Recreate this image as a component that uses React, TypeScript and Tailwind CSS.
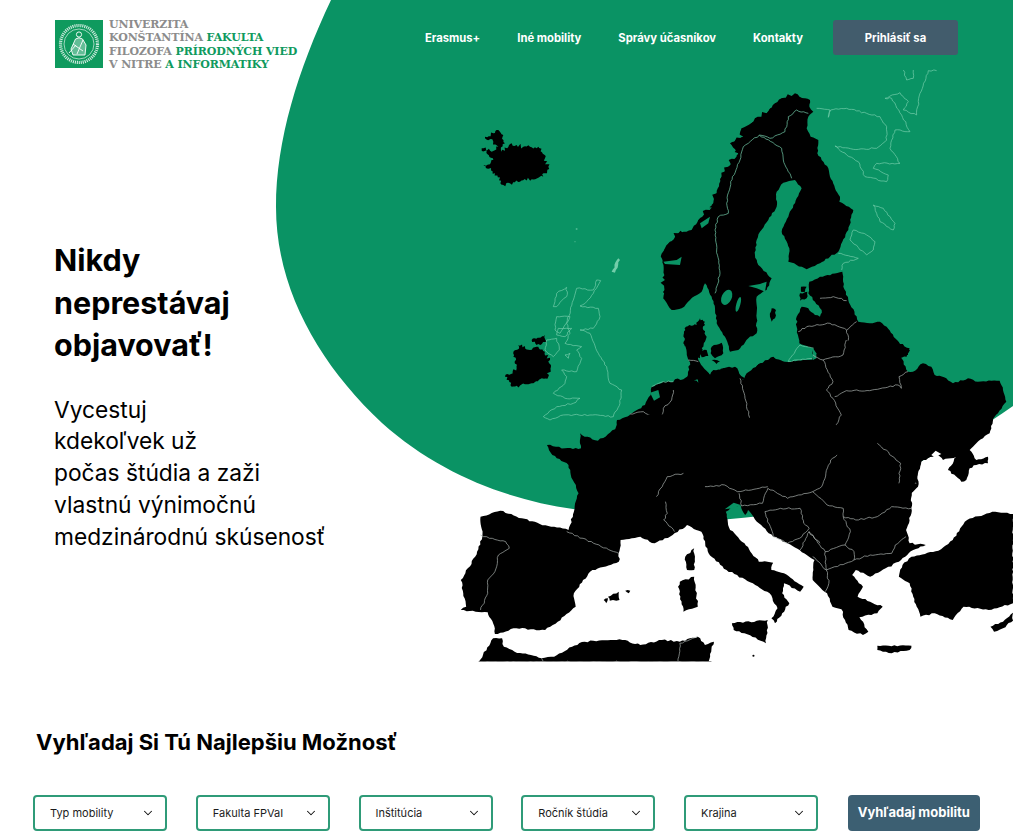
import React from "react";
import { ChevronDown } from "lucide-react";

const BLACK = "#000";
const LINE = "#a9b0ad";
const PALE = "#74cdaa";
const GREEN = "#0a9364";

function wiggle(p: string, amp: number, seg: number, closed: boolean) {
  const pts = p
    .trim()
    .split(/\s+/)
    .map((s) => s.split(",").map(Number));
  let seed = 7;
  for (const q of pts) seed = (seed * 31 + q[0] * 7 + q[1]) % 233280;
  const rnd = () => {
    seed = (seed * 9301 + 49297) % 233280;
    return seed / 233280 - 0.5;
  };
  const out: string[] = [];
  const n = closed ? pts.length : pts.length - 1;
  for (let i = 0; i < n; i++) {
    const a = pts[i];
    const b = pts[(i + 1) % pts.length];
    const dx = b[0] - a[0];
    const dy = b[1] - a[1];
    const len = Math.hypot(dx, dy) || 1;
    const k = Math.max(1, Math.round(len / seg));
    out.push(`${a[0]},${a[1]}`);
    for (let j = 1; j < k; j++) {
      const t = j / k;
      const o = rnd() * amp * 2;
      out.push(`${(a[0] + dx * t - (dy / len) * o).toFixed(1)},${(a[1] + dy * t + (dx / len) * o).toFixed(1)}`);
    }
  }
  if (!closed) out.push(pts[pts.length - 1].join(","));
  return out.join(" ");
}

function L({ p, c = BLACK, amp = 2.5 }: { p: string; c?: string; amp?: number }) {
  return <polygon points={wiggle(p, amp, 8, true)} fill={c} />;
}
function Rough({ p, amp = 8, seg = 5 }: { p: string; amp?: number; seg?: number }) {
  return <polygon points={wiggle(p, amp, seg, true)} fill={BLACK} />;
}
function B({ p, c = LINE, w = 0.7, close = false }: { p: string; c?: string; w?: number; close?: boolean }) {
  const d = wiggle(p, 2.2, 8, close);
  return close ? (
    <polygon points={d} fill="none" stroke={c} strokeWidth={w} vectorEffect="non-scaling-stroke" />
  ) : (
    <polyline points={d} fill="none" stroke={c} strokeWidth={w} vectorEffect="non-scaling-stroke" />
  );
}

function Blob() {
  return (
    <svg className="absolute left-0 top-0" width="1013" height="700" viewBox="0 0 1013 700">
      <path
        d="M331 0 C298 70 276 140 276 207 C276 290 320 365 382 423 C440 475 510 500 573 509 C640 520 700 524 760 516 C860 500 950 450 1013 406 L1013 0 Z"
        fill={GREEN}
      />
    </svg>
  );
}

function EuropeMap() {
  return (
    <svg className="absolute left-0 top-0" width="1013" height="662" viewBox="0 0 1013 662">
      {/* Scandinavia */}
      <g transform="translate(600 60) scale(0.3333)">
        <L amp={2} p="545,115 575,108 600,112 630,120 628,140 640,155 625,170 620,205 632,230 655,240 652,280 685,325 690,350 705,385 720,410 718,425 760,450 745,510 715,575 690,590 660,610 620,628 590,615 565,605 568,565 545,515 565,470 590,415 605,385 585,360 550,368 530,395 530,440 505,480 480,515 470,540 465,585 475,615 515,655 500,690 470,710 470,760 470,820 445,835 415,870 390,875 375,830 350,790 345,745 335,710 315,670 305,695 270,720 245,745 215,750 190,715 195,660 188,600 195,565 235,520 275,510 295,480 330,450 350,400 365,350 385,320 415,280 390,250 430,230 425,205 460,185 500,160 525,130" />
        <Rough amp={13} seg={9} p="190,715 195,660 188,600 195,565 235,520 275,510 295,480 330,450 350,400 365,350 385,320 415,280 400,250 430,230 425,205 460,185 500,160 525,130 545,115 575,108 600,112 630,120 628,140 600,140 520,180 440,260 390,340 360,420 300,510 220,570 220,700" />
        <ellipse cx="380" cy="712" rx="15" ry="24" fill={GREEN} transform="rotate(25 380 712)" />
        <ellipse cx="415" cy="733" rx="6" ry="23" fill={GREEN} transform="rotate(15 415 733)" />
        <polygon points="445,678 480,672 500,665 495,695 470,685" fill={GREEN} />
        <polygon points="300,490 330,470 325,490 305,505" fill={GREEN} />
        <polygon points="190,605 230,600 245,590 240,615 195,612" fill={GREEN} />
        <B p="345,700 360,640 350,570 345,510 355,470 385,460 380,430 392,365 420,300 430,260 445,250 478,225" c={PALE} />
        <B p="478,225 545,265 550,300 575,355" c={PALE} />
        <B p="478,225 510,235 555,215 565,170 590,150 625,160" c={PALE} />
        <L p="515,745 528,750 525,775 515,785 510,770" />
        <L p="600,700 622,695 620,715 600,722" />
        <L p="603,680 620,680 615,695 603,695" />
        {/* Baltics */}
        <L p="628,665 660,650 727,635 730,680 745,720 775,785 810,790 840,785 860,800 900,855 930,870 920,890 900,895 900,960 590,960 540,905 650,900 650,870 598,850 590,800 590,770 605,740 625,745 645,765 660,770 665,750 645,725 625,700" />
        <L p="435,960 470,918 520,890 545,908 600,908 600,960" />
        <polygon points="565,905 600,855 650,868 650,895 600,900" fill={GREEN} />
        <B p="565,905 600,855 650,868 650,895 600,900" c={PALE} close />
        <B p="660,715 700,710 740,722" />
        <B p="595,815 620,800 690,790 740,810 770,785" />
        <B p="740,810 745,840 725,885 680,910 695,960" />
        {/* Denmark */}
        <Rough amp={4} p="258,800 290,795 300,775 315,785 310,810 320,830 310,860 300,895 270,905 265,870 250,850" />
        <L p="300,872 320,870 325,888 305,892" />
        <L p="335,860 365,848 370,880 345,895 332,880" />
        <L p="335,900 360,905 350,912" />
        <L p="270,905 290,910 330,945 370,925 405,920 435,960 260,960" />
        <B p="265,900 290,908" />
        {/* Russia: unfilled outlines */}
        <B c={PALE} p="650,145 690,150 685,172 692,150 740,145 800,160 840,170 860,200 860,240 830,265 760,268 705,258 740,285 775,305 795,350 860,365 865,345 820,325 830,310 900,310 870,265 885,210 930,215 905,165 875,115 855,115 900,98 925,125 910,150 950,165 960,100 985,32 1010,32" />
        <B c={PALE} p="910,30 920,60 940,55 940,30" />
        <B c={PALE} close p="760,510 800,525 825,545 820,570 800,585 750,540" />
        <B c={PALE} close p="820,435 850,445 885,490 880,510 840,485 830,460" />
        <B c={PALE} p="715,580 775,595 730,610 725,630" />
      </g>

      {/* Central Europe north coast */}
      <g transform="translate(630 340) scale(0.3333)">
        <L p="0,222 45,195 62,165 65,140 100,125 130,125 135,118 160,118 175,108 205,128 195,100 175,60 165,0 200,0 205,60 240,105 250,90 290,85 310,90 340,120 350,100 390,70 430,52 470,70 555,58 600,60 600,480 0,480" />
        <polygon points="60,158 85,150 90,172 72,182" fill={GREEN} />
        <B p="175,60 205,65" />
        <B p="330,115 345,175 360,240" />
        <B close p="360,240 395,262 430,265 480,295 430,345 370,335 335,352 300,320 275,280 320,255" />
        <B p="480,295 520,305 565,290 600,300 590,330 540,345 490,380 440,372 430,345" />
        <B p="335,352 298,382 305,405 260,405 225,412 195,405" />
        <B p="440,372 420,395 415,430 360,455 290,432 205,430 195,405" />
        <B p="165,400 130,408 105,420 80,460 100,470 150,460 185,460 215,430" />
        <B p="155,340 135,400" />
        <B p="110,325 155,340" />
        <B p="0,245 30,285 55,295 85,310 105,290 90,245 100,205 125,180 130,150" />
        <B p="0,222 40,215 85,240" />
        <B p="85,310 110,325 100,290" />
        <B p="415,430 450,460 500,475 560,450 600,380" />
        <B p="65,140 100,125 130,125" c={PALE} />
      </g>

      {/* East */}
      <g transform="translate(813 340) scale(0.3333)">
        <L p="240,0 290,25 285,45 262,50 285,95 300,95 330,70 355,80 365,105 400,115 420,130 465,115 495,125 560,122 570,150 580,185 555,220 545,230 530,280 490,310 470,330 490,360 525,350 525,370 490,375 470,385 460,420 445,425 405,390 430,350 390,360 375,345 345,355 325,365 315,400 315,440 295,460 290,480 0,480 0,0" />
        <polygon points="0,25 10,40 10,55 0,60" fill={GREEN} />
        <polygon points="355,345 368,332 385,342 365,352" fill="#fff" />
        <B p="30,60 60,125 40,150 60,175 85,225 50,290 45,330" />
        <B p="0,45 30,60 90,45 100,0" />
        <B p="65,170 100,152 170,152 255,135 265,145 258,110 285,95" />
        <B p="0,290 50,300 45,330 0,335" />
        <B p="0,335 40,340 75,345 130,345 185,310 215,295 265,305 290,345 310,370 280,375 270,430 310,430" />
        <B p="185,310 250,370 260,430" />
        <B p="70,350 45,370 25,440 0,450 20,480" />
      </g>

      {/* South */}
      <g transform="translate(450 380) scale(0.3591 0.3333)">
        <L p="501,105 465,120 460,148 412,182 375,170 362,160 365,205 320,205 270,195 285,225 330,255 342,300 358,340 345,395 330,450 250,432 200,415 140,392 85,410 90,470 70,530 30,600 45,680 30,690 105,697 120,730 125,762 185,745 265,750 300,725 350,680 345,640 390,575 470,545 475,480 530,470 570,490 620,465 660,435 700,455 720,520 770,570 850,615 890,640 912,685 895,715 905,730 925,700 945,670 925,640 930,610 975,635 985,620 930,580 895,570 900,548 860,545 820,490 780,450 768,395 790,380 810,378 822,405 830,390 860,430 900,470 940,490 1000,530 1015,540 1010,600 1050,640 1065,680 1090,688 1100,720 1110,750 1150,765 1165,755 1140,712 1190,700 1205,680 1135,650 1150,620 1120,585 1130,570 1170,590 1250,545 1290,510 1325,495 1280,490 1270,450 1285,400 1285,330 1300,300 1300,150 700,105" />
        <polygon points="765,388 790,368 812,376 790,384" fill={GREEN} />
        <B p="805,340 812,378 870,370 885,325 940,355 970,345" />
        <B p="710,320 765,315 800,335 885,320" />
        <B close p="877,395 920,385 975,385 985,430 1000,445 980,470 940,490 900,470" />
        <B p="970,345 1010,335 1050,375 1095,385 1095,410 1115,455 1100,495 1045,515 1025,490 1000,455" />
        <B p="1010,335 1035,320 1060,240 1078,225" />
        <B p="1095,410 1130,420 1190,410 1230,380 1285,385" />
        <B p="1100,495 1125,515 1125,540 1170,525 1230,520 1240,495 1270,470" />
        <B p="1045,515 1048,570 1125,540" />
        <B p="1010,530 1048,570 1055,610 1045,635" />
        <B p="975,510 1000,455 1030,490" />
        <B p="600,365 605,400 595,420 625,455" />
        <B p="325,455 400,490 470,520" />
        <B p="85,465 110,475 155,485 165,505 135,525 125,575 105,600 105,640 85,690" />
        <B p="575,350 605,290 650,280" />
        <B p="1250,310 1255,250 1190,190" />
        {/* Turkey */}
        <L p="1250,590 1260,555 1285,530 1360,512 1400,480 1440,420 1510,395 1568,402 1568,670 1500,690 1430,680 1400,720 1350,700 1310,710 1290,650 1280,610" />
        <L p="1505,740 1540,725 1568,698 1568,722 1540,745 1515,755" />
        <L p="1190,797 1285,797 1280,810 1230,820 1190,810" />
        <L p="785,730 885,720 880,790 820,760 790,750" />
        <L p="655,530 680,505 680,570 660,570" />
        <L p="640,605 680,590 690,680 650,695 635,620" />
        <L p="440,650 470,635 472,660 445,662" />
        <L p="428,660 440,655 435,670" />
        <L p="488,632 502,632 498,640" />
        <circle cx="845" cy="827" r="3" fill={BLACK} />
        <L p="80,845 120,775 145,775 150,800 180,815 255,835 290,830 340,800 375,785 480,780 530,795 590,780 640,785 690,770 710,795 735,785 720,845" />
        <B p="690,770 640,790 635,845" />
        <B p="255,835 260,845" />
        <polyline points="80,845 728,845" stroke="#8d8d8d" strokeWidth={1} vectorEffect="non-scaling-stroke" />
      </g>

      {/* West */}
      <g transform="translate(450 120) scale(0.3333)">
        <Rough amp={7} p="105,50 130,40 145,30 160,45 165,70 155,95 185,70 200,75 220,80 265,80 285,115 295,140 280,170 210,185 160,195 135,160 100,135 130,120 95,85 125,95 145,80 130,65 105,55" />
        <Rough amp={6} p="205,675 240,690 265,680 300,720 295,770 250,790 185,800 165,770 200,745 190,710" />
        <Rough amp={4} p="245,660 285,645 290,665 260,675" />
        <B c={PALE} close p="380,505 430,510 440,480 452,482 430,520 410,545 390,558 445,565 450,590 430,625 390,630 420,640 445,700 470,740 480,790 515,810 510,850 490,890 420,885 340,885 300,900 280,890 320,860 370,850 390,835 345,835 310,820 345,790 350,770 335,750 380,755 395,715 380,690 395,680 345,670 360,640 350,610 370,540" />
        <B c={PALE} close p="310,560 320,520 350,502 350,530 320,560" />
        <B c={PALE} close p="320,590 360,590 330,640 315,630" />
        <B c={PALE} close p="325,625 365,625 345,650 320,645" />
        <B c={PALE} close p="290,660 320,655 328,690 310,710 285,690" />
        <B c={PALE} close p="345,705 360,700 355,715" />
        <L c={PALE} amp={3} p="485,455 505,415 510,420 495,458" />
        <circle cx="380" cy="327" r="3" fill={PALE} opacity="0.6" />
        <circle cx="375" cy="365" r="2" fill={PALE} opacity="0.6" />
      </g>
    </svg>
  );
}

function Seal() {
  return (
    <svg width="48" height="48" viewBox="0 0 48 48" className="shrink-0">
      <rect width="48" height="48" fill="#0f9a5e" />
      <circle cx="24" cy="24" r="18.5" fill="none" stroke="#fff" strokeWidth="3.2" strokeDasharray="1.1 0.9" opacity="0.8" />
      <circle cx="24" cy="24" r="15" fill="none" stroke="#fff" strokeWidth="0.6" />
      <circle cx="24" cy="14.5" r="2.6" fill="none" stroke="#fff" strokeWidth="0.9" />
      <path d="M20.5 19 Q24 16.5 27.5 19 L31 25 L30 35 H18 L16 29 Z" fill="#fff" opacity="0.35" />
      <path d="M20.5 19 Q24 16.5 27.5 19 L31 25 L30 35 H18 L16 29 Z M18 24 L28 31 M28 20 L22 34 M14 33 L21 25" fill="none" stroke="#fff" strokeWidth="0.9" />
    </svg>
  );
}

function Logo() {
  const serif = "font-['DejaVu_Serif','Liberation_Serif',serif] font-bold";
  const gray = "text-[#8c8c8c]";
  const green = "text-[#0f9a5e]";
  return (
    <div className="flex items-start gap-[6px]">
      <Seal />
      <div className={`${serif} mt-[-2px] text-[11px] leading-[13.4px] tracking-[-0.1px] whitespace-nowrap`}>
        <div className={gray}>UNIVERZITA</div>
        <div className={gray}>
          KONŠTANTÍNA <span className={green}>FAKULTA</span>
        </div>
        <div className={gray}>
          FILOZOFA <span className={green}>PRÍRODNÝCH VIED</span>
        </div>
        <div className={gray}>
          V NITRE <span className={green}>A INFORMATIKY</span>
        </div>
      </div>
    </div>
  );
}

function Select({ label }: { label: string }) {
  return (
    <div className="flex h-[36px] w-[134px] items-center justify-between rounded-[4px] border-2 border-[#2f9b78] pl-[15px] pr-[10px] text-[11px] text-[#1c1c1c]">
      <span>{label}</span>
      <ChevronDown size={14} strokeWidth={1.8} className="text-[#111]" />
    </div>
  );
}

export default function App() {
  return (
    <div className="relative h-[834px] w-full overflow-hidden bg-white font-['Inter','Liberation_Sans',sans-serif] text-black">
      <section className="relative h-[700px]">
        <Blob />
        <EuropeMap />
        <header className="relative flex h-[75px] items-start justify-between pl-[55px] pr-[55px] pt-[20px]">
          <Logo />
          <nav className="flex items-center gap-[37px] text-[11.25px] font-bold text-white">
            <a className="pt-[2px]">Erasmus+</a>
            <a className="pt-[2px]">Iné mobility</a>
            <a className="pt-[2px]">Správy účasníkov</a>
            <a className="mr-[-7px] pt-[2px]">Kontakty</a>
            <a className="flex h-[35px] w-[125px] items-center justify-center rounded-[3px] bg-[#425c6c] pt-[2px]">Prihlásiť sa</a>
          </nav>
        </header>
        <div className="relative pl-[54px] pt-[164px]">
          <h1 className="text-[30.5px] font-bold leading-[42.5px]">
            Nikdy
            <br />
            neprestávaj
            <br />
            objavovať!
          </h1>
          <p className="mt-[27px] text-[22.75px] leading-[31.75px]">
            Vycestuj
            <br />
            kdekoľvek už
            <br />
            počas štúdia a zaži
            <br />
            vlastnú výnimočnú
            <br />
            medzinárodnú skúsenosť
          </p>
        </div>
      </section>
      <section>
        <h2 className="mt-[27px] pl-[36px] text-[22px] font-bold leading-[30px]">Vyhľadaj Si Tú Najlepšiu Možnosť</h2>
        <div className="mt-[38px] flex gap-[28.75px] pl-[33px]">
          <Select label="Typ mobility" />
          <Select label="Fakulta FPVaI" />
          <Select label="Inštitúcia" />
          <Select label="Ročník štúdia" />
          <Select label="Krajina" />
          <button className="ml-[1px] h-[36px] w-[132px] rounded-[4px] bg-[#3c5f72] text-[13px] font-bold text-white">Vyhľadaj mobilitu</button>
        </div>
      </section>
    </div>
  );
}
